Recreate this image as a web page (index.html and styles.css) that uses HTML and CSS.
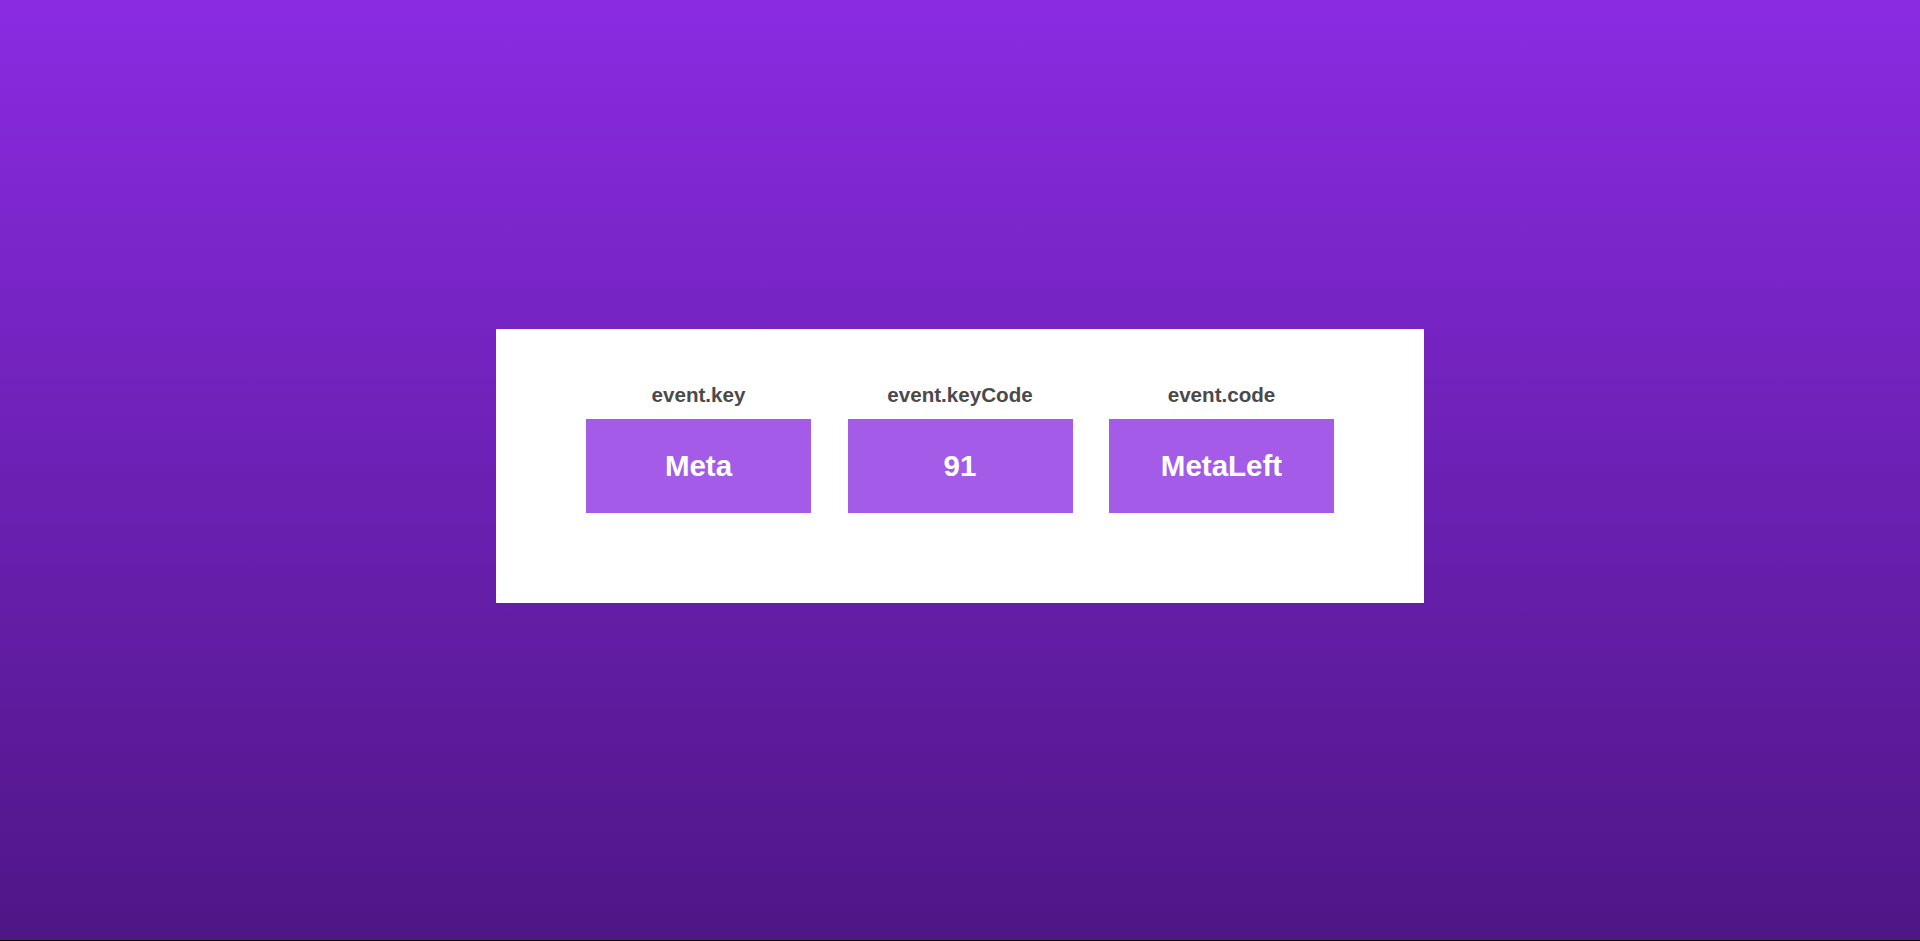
FILE: index.html
```html
<!DOCTYPE html>
<html lang="en">
<head>
<meta charset="utf-8">
<title>Key Codes</title>
<link rel="stylesheet" href="styles.css">
</head>
<body>
<main class="page">
  <section class="card">
    <div class="keys">
      <div class="key">
        <h3 class="key-label">event.key</h3>
        <div class="key-value">Meta</div>
      </div>
      <div class="key">
        <h3 class="key-label">event.keyCode</h3>
        <div class="key-value">91</div>
      </div>
      <div class="key">
        <h3 class="key-label">event.code</h3>
        <div class="key-value">MetaLeft</div>
      </div>
    </div>
  </section>
</main>
</body>
</html>
```

FILE: styles.css
```css
html {
  background: #000;
}

body {
  margin: 0;
  font-family: "Liberation Sans", Arial, sans-serif;
}

.page {
  height: 940px;
  box-sizing: border-box;
  padding-bottom: 8px;
  background: linear-gradient(to bottom, #8a2be2 0%, #4f1686 100%);
  display: flex;
  align-items: center;
  justify-content: center;
}

.card {
  width: 928px;
  height: 274px;
  box-sizing: border-box;
  background: #fff;
  padding-top: 54px;
}

.keys {
  display: grid;
  grid-template-columns: repeat(3, 225px);
  column-gap: 36.5px;
  justify-content: center;
}

.key {
  display: flex;
  flex-direction: column;
  align-items: center;
}

.key-label {
  margin: 0 0 13px;
  font-size: 20.6px;
  line-height: 23px;
  font-weight: 700;
  color: #4a4a4a;
}

.key-value {
  width: 225px;
  height: 94px;
  background: #a35be8;
  color: #fff;
  font-size: 29.5px;
  font-weight: 700;
  display: flex;
  align-items: center;
  justify-content: center;
}
```
